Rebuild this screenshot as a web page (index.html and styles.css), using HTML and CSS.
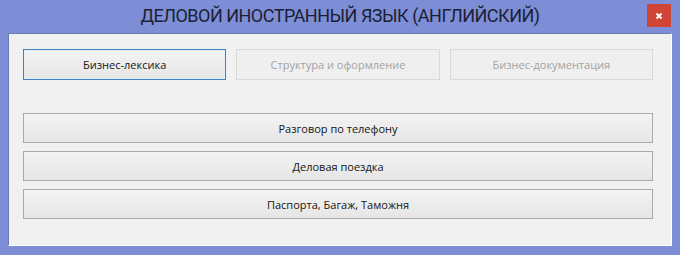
FILE: index.html
```html
<!DOCTYPE html>
<html lang="ru">
<head>
<meta charset="utf-8">
<title>Деловой иностранный язык</title>
<link rel="stylesheet" href="styles.css">
</head>
<body>
<div class="window">
  <div class="titlebar">
    <span class="spacer"></span>
    <h1 class="title">ДЕЛОВОЙ ИНОСТРАННЫЙ ЯЗЫК (АНГЛИЙСКИЙ)</h1>
    <button class="close" aria-label="Закрыть">
      <svg width="8" height="8" viewBox="0 0 8 8"><path d="M1.5 1.5L6.5 6.5M6.5 1.5L1.5 6.5" stroke="#fff" stroke-width="2"/></svg>
    </button>
  </div>
  <div class="client">
    <div class="tabs">
      <button class="btn btn-focus">Бизнес-лексика</button>
      <button class="btn btn-disabled" disabled>Структура и оформление</button>
      <button class="btn btn-disabled" disabled>Бизнес-документация</button>
    </div>
    <div class="list">
      <button class="btn btn-row">Разговор по телефону</button>
      <button class="btn btn-row">Деловая поездка</button>
      <button class="btn btn-row">Паспорта, Багаж, Таможня</button>
    </div>
  </div>
</div>
</body>
</html>
```

FILE: styles.css
```css
* { box-sizing: border-box; }
html, body { margin: 0; padding: 0; }
body {
  width: 680px;
  height: 255px;
  background: #7d8ed6;
  font-family: "Open Sans", "Noto Sans", sans-serif;
  overflow: hidden;
}
.window {
  display: flex;
  flex-direction: column;
  height: 255px;
}
.titlebar {
  height: 33px;
  display: grid;
  grid-template-columns: 1fr auto 1fr;
  align-items: start;
}
.title {
  margin: 0;
  padding-top: 1px;
  font-family: Roboto, "Open Sans", sans-serif;
  font-weight: 400;
  font-size: 18px;
  letter-spacing: -0.5px;
  line-height: 30px;
  color: #1b1e35;
  white-space: nowrap;
}
.close {
  justify-self: end;
  margin: 4px 9px 0 0;
  width: 24px;
  height: 23px;
  padding: 0;
  border: 0;
  background: #cf4538;
  display: flex;
  align-items: center;
  justify-content: center;
}
.client {
  margin: 0 8px 9px 8px;
  height: 213px;
  background: #f1f1f1;
  border-top: 1px solid #6b79b4;
  border-left: 1px solid #6b79b4;
  border-right: 1px solid #ffffff;
  border-bottom: 1px solid #ffffff;
  padding: 15px 18px 0 14px;
}
.tabs {
  display: grid;
  grid-template-columns: repeat(3, 1fr);
  column-gap: 10px;
}
.btn {
  font-family: "Open Sans", "Noto Sans", sans-serif;
  font-size: 11px;
  color: #141414;
  padding: 0;
  margin: 0;
}
.tabs .btn { height: 31px; }
.btn-focus {
  border: 1px solid #3e82c2;
  background: linear-gradient(#f3f3f3, #e7e7e7);
  box-shadow: inset 0 0 0 1px #e4eef8;
}
.btn-disabled {
  border: 1px solid #d9d9d9;
  background: #efefef;
  color: #a3a3a3;
}
.list {
  margin-top: 33px;
  display: flex;
  flex-direction: column;
  gap: 8px;
}
.btn-row {
  height: 30px;
  border: 1px solid #a9a9a9;
  background: linear-gradient(#f3f3f3, #e6e6e6);
}
```
